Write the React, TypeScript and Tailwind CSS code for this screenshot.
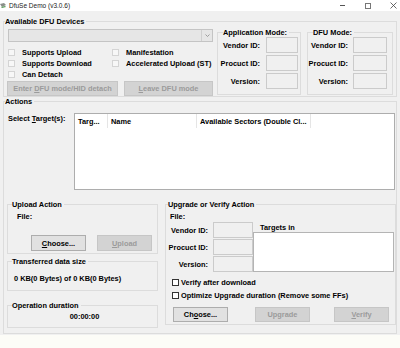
import React from "react";

const btnOff =
  "h-[15px] border border-[#c6c6c6] bg-[#d3d3d3] text-[#9b9b9b] flex items-center justify-center";
const btnOn =
  "h-[15px] border border-[#adadad] bg-[#e1e1e1] text-black flex items-center justify-center";
const field = "h-[16px] border border-[#cbcbcb] bg-[#f0f0f0]";

function TitleBar() {
  return (
    <div className="h-[11px] bg-white flex items-center font-normal text-[6.5px] text-[#1a1a1a]">
      <svg width="7" height="7" viewBox="0 0 7 7" className="ml-[0px]">
        <path d="M0 2 L4 1 L6 3 L2 5 Z" fill="#8a8f8a" />
        <path d="M1 5 L5 4 L6 5 L2 6 Z" fill="#5b9c5b" />
      </svg>
      <span className="ml-[2px]">DfuSe Demo (v3.0.6)</span>
      <div className="ml-auto flex items-center mr-[3px]">
        <div className="w-[5px] h-px bg-[#555]" />
        <div className="ml-[20px] w-[6px] h-[6px] border border-[#777]" />
        <svg width="7" height="7" viewBox="0 0 7 7" className="ml-[19px]">
          <path d="M0.5 0.5 L6.5 6.5 M6.5 0.5 L0.5 6.5" stroke="#444" strokeWidth="0.8" />
        </svg>
      </div>
    </div>
  );
}

function Check({ label, on = false }: { label: string; on?: boolean }) {
  return (
    <div className="flex items-center h-full">
      <div
        className={
          on
            ? "w-[7px] h-[7px] border border-[#333] bg-white"
            : "w-[7px] h-[7px] border border-[#d4d4d4] bg-[#f7f7f7]"
        }
      />
      <span className={on ? "ml-[2px]" : "ml-[7px]"}>{label}</span>
    </div>
  );
}

function ModeGroup({ title, labelW, inputW, gap, className }: { title: string; labelW: string; inputW: string; gap: string; className: string }) {
  const rows = ["Vendor ID:", "Procuct ID:", "Version:"];
  return (
    <fieldset className={`border border-[#dcdcdc] ${className}`}>
      <legend className="ml-[5px] pr-[2px]">{title}</legend>
      <div className="flex flex-col gap-[2px] pb-[5px]">
        {rows.map((r) => (
          <div key={r} className={`flex items-center ${gap}`}>
            <span className={`${labelW} text-right`}>{r}</span>
            <div className={`${field} ${inputW}`} />
          </div>
        ))}
      </div>
    </fieldset>
  );
}

export default function App() {
  return (
    <div className="w-[400px] h-[348px] flex flex-col bg-[#f0f0f0] overflow-hidden font-['Liberation_Sans',Arial,sans-serif] text-[7.4px] leading-[9px] font-bold text-black">
      <TitleBar />

      <fieldset className="mx-[3px] mt-[6px] border border-[#dcdcdc]">
        <legend className="ml-[1px] pr-[2px]">Available DFU Devices</legend>
        <div className="flex items-start pl-[4px]">
          <div className="w-[205px] pt-[3px]">
            <div className="h-[13px] border border-[#c4c4c4] bg-[#e6e6e6] flex justify-end">
              <div className="w-[11px] border-l border-[#cfcfcf] flex items-center justify-center">
                <svg width="5" height="3" viewBox="0 0 5 3">
                  <path d="M0.5 0.5 L2.5 2.5 L4.5 0.5" fill="none" stroke="#8a8a8a" strokeWidth="0.8" />
                </svg>
              </div>
            </div>
            <div className="mt-[5px] grid grid-cols-[104px_1fr] auto-rows-[11px]">
              <Check label="Supports Upload" />
              <Check label="Manifestation" />
              <Check label="Supports Download" />
              <Check label="Accelerated Upload (ST)" />
              <Check label="Can Detach" />
            </div>
            <div className="mt-[1px] flex">
              <div className={`${btnOff} -ml-[1px] w-[111px]`}>
                <span>
                  Enter <u>D</u>FU mode/HID detach
                </span>
              </div>
              <div className={`${btnOff} ml-[6px] w-[89px]`}>
                <span>
                  <u>L</u>eave DFU mode
                </span>
              </div>
            </div>
          </div>
          <ModeGroup
            title="Application Mode:"
            className="ml-[4px] mt-[2px] w-[84px]"
            labelW="w-[42px]"
            inputW="w-[32px]"
            gap="gap-[6px]"
          />
          <ModeGroup
            title="DFU Mode:"
            className="ml-[6px] mt-[2px] w-[86px]"
            labelW="w-[40px]"
            inputW="w-[34px]"
            gap="gap-[5px]"
          />
        </div>
      </fieldset>

      <fieldset className="mx-[3px] border border-[#dcdcdc]">
        <legend className="ml-[1px] pr-[2px]">Actions</legend>
        <div className="pb-[5px]">
          <div className="flex items-start pl-[4px] mt-[7px]">
            <span className="w-[66px] pt-[1px]">
              Select <u>T</u>arget(s):
            </span>
            <div className="w-[321px] h-[77px] border border-[#adadad] bg-white">
              <div className="h-[14px] flex">
                <div className="w-[33px] pl-[3px] border-r border-[#e5e5e5] flex items-center">Targ...</div>
                <div className="w-[89px] pl-[3px] border-r border-[#e5e5e5] flex items-center">Name</div>
                <div className="w-[114px] pl-[3px] border-r border-[#e5e5e5] flex items-center whitespace-nowrap overflow-hidden">
                  Available Sectors (Double Cl...
                </div>
              </div>
            </div>
          </div>

          <div className="flex items-start pl-[3px] mt-[10px]">
            <div className="w-[151px] flex flex-col">
              <fieldset className="border border-[#dcdcdc]">
                <legend className="ml-[4px] pr-[2px]">Upload Action</legend>
                <div className="pl-[9px] pt-[3px]">File:</div>
                <div className="flex mt-[14px] pb-[2px]">
                  <div className={`${btnOn} ml-[23px] w-[55px] h-[16px]`}>
                    <span>
                      <u>C</u>hoose...
                    </span>
                  </div>
                  <div className={`${btnOff} ml-[11px] w-[55px] h-[16px]`}>
                    <span>
                      <u>U</u>pload
                    </span>
                  </div>
                </div>
              </fieldset>
              <fieldset className="mt-[3px] border border-[#dcdcdc]">
                <legend className="ml-[4px] pr-[2px]">Transferred data size</legend>
                <div className="pl-[6px] pt-[8px] pb-[7px]">0 KB(0 Bytes) of 0 KB(0 Bytes)</div>
              </fieldset>
              <fieldset className="mt-[10px] border border-[#dcdcdc]">
                <legend className="ml-[4px] pr-[2px]">Operation duration</legend>
                <div className="pl-[4px] pt-[2px] pb-[6px] text-center">00:00:00</div>
              </fieldset>
            </div>

            <fieldset className="ml-[7px] w-[231px] border border-[#dcdcdc]">
              <legend className="ml-[2px] pr-[2px]">Upgrade or Verify Action</legend>
              <div className="pl-[4px] pt-[3px]">File:</div>
              <div className="flex mt-[1px]">
                <div className="flex flex-col gap-[1px]">
                  {["Vendor ID:", "Procuct ID:", "Version:"].map((r) => (
                    <div key={r} className="flex items-center gap-[5px]">
                      <span className="w-[42px] text-right">{r}</span>
                      <div className={`${field} w-[40px]`} />
                    </div>
                  ))}
                </div>
                <div className="flex flex-col">
                  <div className="pl-[7px] pt-[1px]">Targets in</div>
                  <div className="w-[141px] h-[40px] border border-[#b4b4b4] bg-white" />
                </div>
              </div>
              <div className="mt-[4px] pl-[6px] flex flex-col">
                <div className="h-[13px]">
                  <Check label="Verify after download" on />
                </div>
                <div className="h-[13px]">
                  <Check label="Optimize Upgrade duration (Remove some FFs)" on />
                </div>
              </div>
              <div className="flex mt-[5px] pb-[2px]">
                <div className={`${btnOn} ml-[7px] w-[55px]`}>
                  <span>
                    Ch<u>o</u>ose...
                  </span>
                </div>
                <div className={`${btnOff} ml-[27px] w-[55px]`}>
                  <span>Upgrade</span>
                </div>
                <div className={`${btnOff} ml-[24px] w-[55px]`}>
                  <span>
                    <u>V</u>erify
                  </span>
                </div>
              </div>
            </fieldset>
          </div>
        </div>
      </fieldset>

      <div className="flex-1 mt-[1px] bg-[#fcfcf7]" />
    </div>
  );
}
